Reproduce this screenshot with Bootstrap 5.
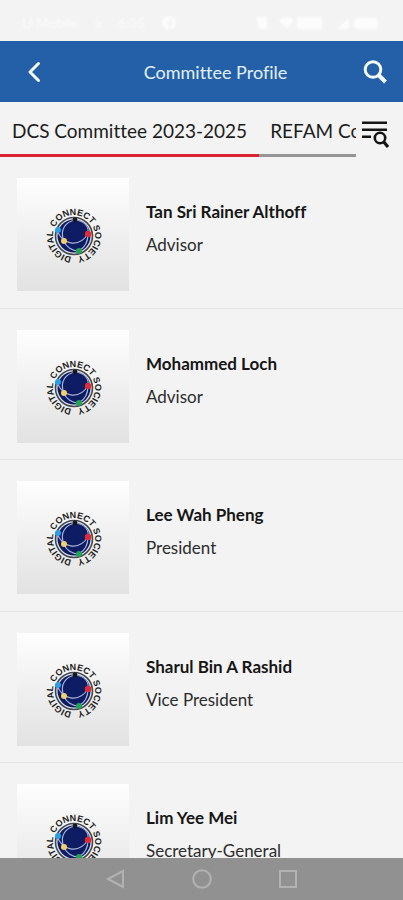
<!DOCTYPE html>
<html lang="en">
<head>
<meta charset="utf-8">
<meta name="viewport" content="width=device-width, initial-scale=1">
<title>Committee Profile</title>
<link href="https://cdn.jsdelivr.net/npm/bootstrap@5.3.0/dist/css/bootstrap.min.css" rel="stylesheet">
<style>
  body { background: #f3f3f3; color: #161616; font-family: Lato, "Open Sans", sans-serif; font-variant-ligatures: none; }
  svg { display: block; }
  .status-bar { height: 41px; padding: 5px 24px 0 22px; font-size: 14px; line-height: 16px; color: #fcfcfc; }
  .status-bar span, .status-bar svg { filter: blur(1px); }
  .app-bar { height: 61px; background: #2360a7; color: #e3f0fc; padding: 0 16px 0 24px; }
  .app-bar h1 { font-size: 18px; line-height: 24px; padding-left: 20px; }
  .icon-btn { border: 0; background: none; padding: 0; color: inherit; }
  .tab-strip { height: 55px; padding-right: 14px; }
  .tab-scroll { overflow: hidden; min-width: 0; margin-right: 6px; }
  .tab-link { flex: none; font-size: 19px; line-height: 24px; padding: 17px 12px 0 12px; color: #1c1c1c; text-decoration: none; white-space: nowrap; border-bottom: 3px solid #959595; }
  .tab-link + .tab-link { padding-left: 11px; }
  .tab-link.active { border-color: #dc2430; }
  .tab-strip .icon-btn { padding-top: 9px; }
  .scroller { min-height: 0; overflow-y: auto; scrollbar-width: none; }
  .scroller::-webkit-scrollbar { display: none; }
  .member { padding: 21px 17px 17px; gap: 17px; border-bottom: 1px solid #e3e3e3; }
  .member:nth-child(even) { padding-bottom: 16px; }
  .portrait { width: 112px; height: 113px; flex: none; background: linear-gradient(#fefefe, #f3f3f3 38%, #e2e2e2); }
  .member h2 { font-size: 17px; line-height: 24px; margin: 0 0 9px; font-weight: 700; padding-top: 22px; }
  .member p { font-size: 17px; line-height: 24px; margin: 0; color: #2c2c2c; }
  .system-nav { height: 42px; background: #919191; color: #b2b2b2; gap: 62px; }
</style>
</head>
<body>
<svg width="0" height="0" class="position-absolute" aria-hidden="true">
  <defs>
    <path id="ring" d="M0 21A21 21 0 0 1 0 -21A21 21 0 0 1 0 21"/>
    <symbol id="society-logo" viewBox="-57 -58 112 113">
      <g font-family="Liberation Sans, Arial, sans-serif" font-size="9" font-weight="700" fill="#1d1d20" text-anchor="middle">
        <text transform="rotate(-5)"><textPath href="#ring" startOffset="50%">CONNECT</textPath></text>
        <text transform="rotate(117)"><textPath href="#ring" startOffset="50%">SOCIETY</textPath></text>
        <text transform="rotate(235)"><textPath href="#ring" startOffset="50%">DIGITAL</textPath></text>
      </g>
      <circle r="18.500" fill="#dfe2ea" stroke="#44464f" stroke-width="1.600"/>
      <circle r="16.500" fill="#0d1c63"/>
      <g fill="none" stroke="#a9b4da" stroke-width="1.200">
        <path d="M-10 5C-15 -6 -8 -15 2 -16"/>
        <path d="M-17 -6C-12 8 4 13 14 -2"/>
        <path d="M2 -16C12 -14 15 -8 14 -2C14 6 10 12 5 15C-2 15 -8 11 -10 5"/>
      </g>
      <circle cx="1" cy="-16" r="2.400" fill="#15151b"/>
      <circle cx="-16" cy="-6" r="3" fill="#28a0e4"/>
      <circle cx="14" cy="-2" r="3.200" fill="#e02a38"/>
      <circle cx="-10" cy="5" r="3" fill="#f3d06b"/>
      <circle cx="5" cy="15" r="3" fill="#23a354"/>
    </symbol>
  </defs>
</svg>

<div class="d-flex flex-column vh-100">
  <div class="status-bar d-flex align-items-center justify-content-between flex-shrink-0">
    <div class="d-flex gap-3 align-items-center"><span>U Mobile</span><span>a</span><span>6:35</span>
      <svg width="16" height="14" viewBox="0 0 16 14" fill="currentColor" aria-hidden="true"><path d="M8 0a7 7 0 1 0 0 14V8H6V6h2V4q0-2 3-2v2h-1v2h2l-1 2h-1v5.700A7 7 0 0 0 8 0z"/></svg>
    </div>
    <svg width="124" height="16" viewBox="0 0 124 16" fill="currentColor" aria-hidden="true">
      <path d="M1 2h11v12H4zM24 5q8-6 15 0l-7 9zM42 2h25v12H42zM84 12l10-9v11H82z"/><rect x="99" y="3" width="24" height="11" rx="4"/>
    </svg>
  </div>

  <header class="app-bar d-flex align-items-center flex-shrink-0">
    <button type="button" class="icon-btn" aria-label="Back">
      <svg width="24" height="24" viewBox="0 0 24 24" fill="none" stroke="#f6fbff" stroke-width="3" stroke-linecap="round" stroke-linejoin="round"><path d="M14.500 3.500L6 12L14.500 20.500"/></svg>
    </button>
    <h1 class="m-0 fw-normal flex-grow-1 text-center">Committee Profile</h1>
    <button type="button" class="icon-btn" aria-label="Search">
      <svg width="24" height="24" viewBox="0 0 24 24" fill="none" stroke="#f6fbff" stroke-width="3"><circle cx="10" cy="9.500" r="7.800"/><path d="M15.500 15L22.500 22" stroke-width="4"/></svg>
    </button>
  </header>

  <div class="tab-strip d-flex flex-shrink-0">
    <nav class="tab-scroll d-flex flex-grow-1" aria-label="Committees">
      <a href="#members" class="tab-link active" aria-current="page">DCS Committee 2023-2025</a>
      <a href="#refam" class="tab-link">REFAM Committee</a>
    </nav>
    <button type="button" class="icon-btn flex-shrink-0" aria-label="Search the list">
      <svg width="27" height="27" viewBox="0 0 27 27" fill="none" stroke="#151515" stroke-width="2.600"><path d="M0 1.700H25M0 8.700H25M0 15.700H9"/><circle cx="18" cy="17" r="5.200" fill="#f3f3f3"/><path d="M21.500 20.500L26 26" stroke-width="3.200"/></svg>
    </button>
  </div>

  <main id="members" class="scroller flex-grow-1">
    <article class="member d-flex">
      <svg class="portrait" role="img" aria-label="Digital Connect Society"><use href="#society-logo"/></svg>
      <div><h2>Tan Sri Rainer Althoff</h2><p>Advisor</p></div>
    </article>
    <article class="member d-flex">
      <svg class="portrait" role="img" aria-label="Digital Connect Society"><use href="#society-logo"/></svg>
      <div><h2>Mohammed Loch</h2><p>Advisor</p></div>
    </article>
    <article class="member d-flex">
      <svg class="portrait" role="img" aria-label="Digital Connect Society"><use href="#society-logo"/></svg>
      <div><h2>Lee Wah Pheng</h2><p>President</p></div>
    </article>
    <article class="member d-flex">
      <svg class="portrait" role="img" aria-label="Digital Connect Society"><use href="#society-logo"/></svg>
      <div><h2>Sharul Bin A Rashid</h2><p>Vice President</p></div>
    </article>
    <article class="member d-flex">
      <svg class="portrait" role="img" aria-label="Digital Connect Society"><use href="#society-logo"/></svg>
      <div><h2>Lim Yee Mei</h2><p>Secretary-General</p></div>
    </article>
  </main>

  <div class="system-nav d-flex align-items-center justify-content-center flex-shrink-0">
    <button type="button" class="icon-btn" aria-label="System back"><svg width="24" height="20" viewBox="0 0 24 20" fill="none" stroke="currentColor" stroke-width="2"><path d="M19 2V18L4 10Z"/></svg></button>
    <button type="button" class="icon-btn" aria-label="Home"><svg width="24" height="20" viewBox="0 0 24 20" fill="none" stroke="currentColor" stroke-width="2"><circle cx="12" cy="10" r="8.800"/></svg></button>
    <button type="button" class="icon-btn" aria-label="Recent apps"><svg width="24" height="20" viewBox="0 0 24 20" fill="none" stroke="currentColor" stroke-width="2"><path d="M4 2H20V18H4Z"/></svg></button>
  </div>
</div>
<script src="https://cdn.jsdelivr.net/npm/bootstrap@5.3.0/dist/js/bootstrap.bundle.min.js"></script>
</body>
</html>
